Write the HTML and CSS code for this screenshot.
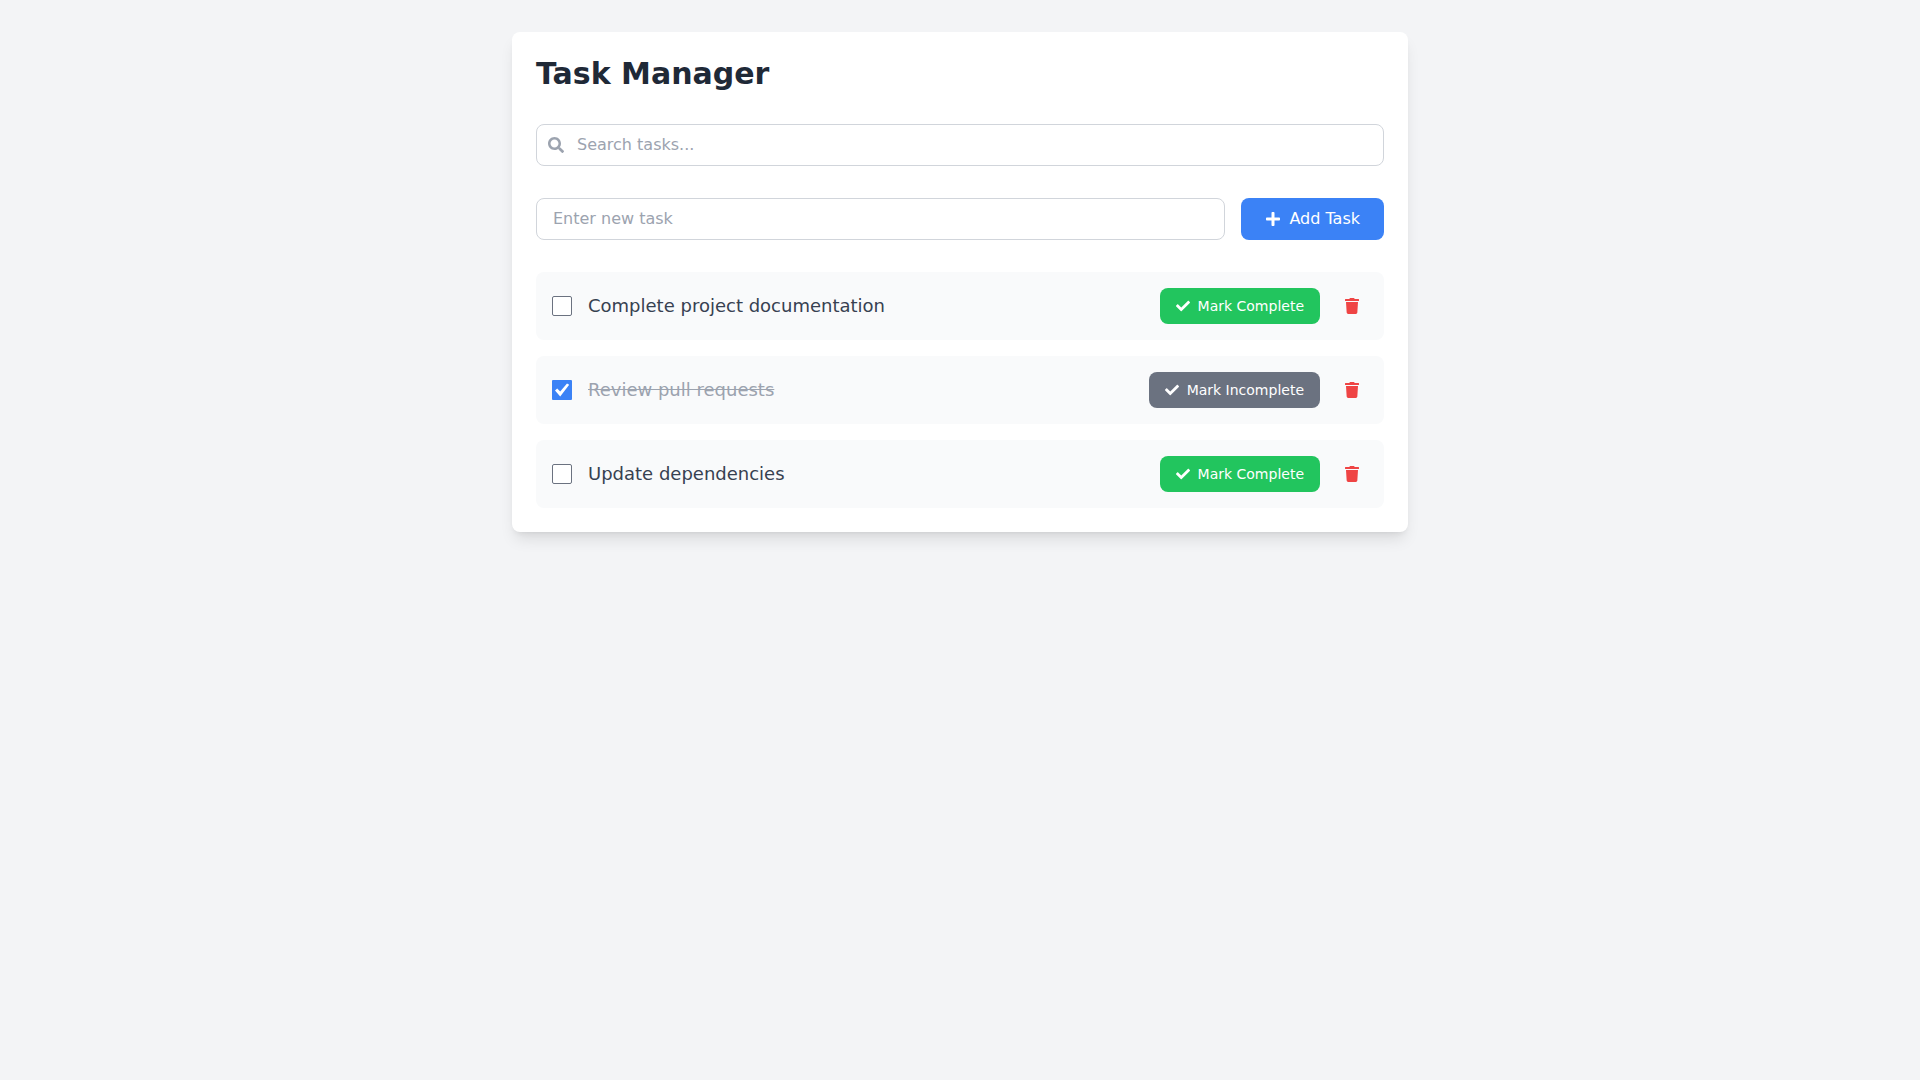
FILE: index.html
```html
<!DOCTYPE html>
<html lang="en">
<head>
    <meta charset="UTF-8">
    <meta name="viewport" content="width=device-width, initial-scale=1.0">
    <title>Task Manager</title>
    <link rel="stylesheet" href="styles.css">
</head>
<body>
    <svg class="sprite" aria-hidden="true">
        <symbol id="icon-search" viewBox="0 0 512 512">
            <path d="M505 442.7L405.3 343c-4.5-4.5-10.6-7-17-7H372c27.6-35.3 44-79.7 44-128C416 93.1 322.9 0 208 0S0 93.1 0 208s93.1 208 208 208c48.3 0 92.7-16.4 128-44v16.3c0 6.4 2.5 12.5 7 17l99.7 99.7c9.4 9.4 24.6 9.4 33.9 0l28.3-28.3c9.4-9.4 9.4-24.6.1-34zM208 336c-70.7 0-128-57.2-128-128 0-70.7 57.2-128 128-128 70.7 0 128 57.2 128 128 0 70.7-57.2 128-128 128z"/>
        </symbol>
        <symbol id="icon-plus" viewBox="0 0 448 512">
            <path d="M416 208H272V64c0-17.67-14.33-32-32-32h-32c-17.67 0-32 14.33-32 32v144H32c-17.67 0-32 14.33-32 32v32c0 17.67 14.33 32 32 32h144v144c0 17.67 14.33 32 32 32h32c17.67 0 32-14.33 32-32V304h144c17.67 0 32-14.33 32-32v-32c0-17.67-14.33-32-32-32z"/>
        </symbol>
        <symbol id="icon-check" viewBox="0 0 512 512">
            <path d="M173.898 439.404l-166.4-166.4c-9.997-9.997-9.997-26.206 0-36.204l36.203-36.204c9.997-9.998 26.207-9.998 36.204 0L192 312.69 432.095 72.596c9.997-9.997 26.207-9.997 36.204 0l36.203 36.204c9.997 9.997 9.997 26.206 0 36.204l-294.4 294.401c-9.998 9.997-26.207 9.997-36.204-.001z"/>
        </symbol>
        <symbol id="icon-trash" viewBox="0 0 448 512">
            <path d="M432 32H312l-9.4-18.7A24 24 0 0 0 281.1 0H166.8a23.72 23.72 0 0 0-21.4 13.3L136 32H16A16 16 0 0 0 0 48v32a16 16 0 0 0 16 16h416a16 16 0 0 0 16-16V48a16 16 0 0 0-16-16zM53.2 467a48 48 0 0 0 47.9 45h245.8a48 48 0 0 0 47.9-45L416 128H32z"/>
        </symbol>
    </svg>
    <main class="card">
        <h1>Task Manager</h1>
        <div class="search">
            <svg class="icon search-icon"><use href="#icon-search"/></svg>
            <input type="text" class="field" placeholder="Search tasks..." aria-label="Search tasks">
        </div>
        <form class="add-form" onsubmit="return false">
            <input type="text" class="field" placeholder="Enter new task" aria-label="New task">
            <button type="submit" class="btn blue"><svg class="icon"><use href="#icon-plus"/></svg>Add Task</button>
        </form>
        <ul class="tasks">
            <li class="task">
                <input type="checkbox" id="task1">
                <label for="task1">Complete project documentation</label>
                <button type="button" class="btn small green"><svg class="icon"><use href="#icon-check"/></svg>Mark Complete</button>
                <button type="button" class="delete" aria-label="Delete task"><svg class="icon"><use href="#icon-trash"/></svg></button>
            </li>
            <li class="task done">
                <input type="checkbox" id="task2" checked>
                <label for="task2">Review pull requests</label>
                <button type="button" class="btn small gray"><svg class="icon"><use href="#icon-check"/></svg>Mark Incomplete</button>
                <button type="button" class="delete" aria-label="Delete task"><svg class="icon"><use href="#icon-trash"/></svg></button>
            </li>
            <li class="task">
                <input type="checkbox" id="task3">
                <label for="task3">Update dependencies</label>
                <button type="button" class="btn small green"><svg class="icon"><use href="#icon-check"/></svg>Mark Complete</button>
                <button type="button" class="delete" aria-label="Delete task"><svg class="icon"><use href="#icon-trash"/></svg></button>
            </li>
        </ul>
    </main>
</body>
</html>
```
FILE: styles.css
```css
*, *:before, *:after {
    box-sizing: border-box;
}
body {
    margin: 0;
    padding: 32px 16px;
    background: #f3f4f6;
    color: #1f2937;
    font-family: "DejaVu Sans", sans-serif;
    font-size: 16px;
    line-height: 24px;
}
.sprite {
    display: none;
}
.card {
    max-width: 896px;
    margin: 0 auto;
    padding: 24px;
    background: white;
    border-radius: 8px;
    box-shadow: 0 10px 15px -3px rgba(0, 0, 0, 0.1), 0 4px 6px -4px rgba(0, 0, 0, 0.1);
}
h1 {
    margin: 0 0 32px;
    font-size: 30px;
    line-height: 36px;
    font-weight: 700;
}
.icon {
    width: 1em;
    height: 1em;
    flex-shrink: 0;
    fill: currentColor;
}
.field {
    width: 100%;
    min-width: 0;
    padding: 8px 16px;
    border: 1px solid #d1d5db;
    border-radius: 8px;
    background: white;
    color: #1f2937;
    font: inherit;
}
.field::placeholder {
    color: #9ca3af;
}
.field:focus {
    outline: 2px solid #3b82f6;
}
.search {
    position: relative;
    display: flex;
    align-items: center;
    margin-bottom: 32px;
}
.search .field {
    padding-left: 40px;
}
.search-icon {
    position: absolute;
    left: 12px;
    color: #9ca3af;
}
.add-form {
    display: flex;
    gap: 16px;
    margin-bottom: 32px;
}
button {
    border: none;
    cursor: pointer;
    font: inherit;
}
.btn {
    display: flex;
    align-items: center;
    flex-shrink: 0;
    gap: 8px;
    padding: 8px 24px;
    border-radius: 8px;
    color: white;
}
.btn:hover {
    filter: brightness(0.9);
}
.small {
    padding: 8px 16px;
    font-size: 14px;
    line-height: 20px;
}
.blue {
    background: #3b82f6;
}
.green {
    background: #22c55e;
}
.gray {
    background: #6b7280;
}
.tasks {
    display: flex;
    flex-direction: column;
    gap: 16px;
    margin: 0;
    padding: 0;
    list-style: none;
}
.task {
    display: flex;
    align-items: center;
    gap: 16px;
    padding: 16px;
    background: #f9fafb;
    border-radius: 8px;
}
.task input {
    appearance: none;
    display: grid;
    flex-shrink: 0;
    width: 20px;
    height: 20px;
    margin: 0;
    border: 1px solid #6b7280;
    border-radius: 2px;
    background: white;
}
.task input:checked {
    border: none;
    border-radius: 1px;
    background: #3b82f6;
}
/* tick mark */
.task input:checked:before {
    content: "";
    background: white;
    clip-path: polygon(15% 53%, 26% 43%, 41% 58%, 75% 17%, 86% 24%, 41% 82%);
}
.task label {
    flex: 1;
    font-size: 18px;
    line-height: 28px;
    color: #374151;
}
.done label {
    color: #9ca3af;
    text-decoration: line-through;
}
.delete {
    display: flex;
    padding: 8px;
    background: none;
    color: #ef4444;
}
```
